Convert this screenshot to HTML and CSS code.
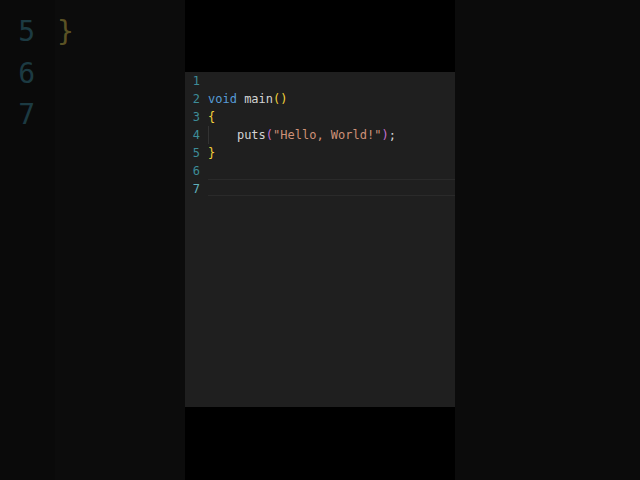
FILE: index.html
```html
<!DOCTYPE html>
<html>
<head>
<meta charset="utf-8">
<link rel="stylesheet" href="styles.css">
</head>
<body>
<div class="stage">
  <div class="side side-left">
    <div class="big-code">
      <div class="big-line"><span class="big-num">5</span><span class="big-brace">}</span></div>
      <div class="big-line"><span class="big-num">6</span></div>
      <div class="big-line"><span class="big-num">7</span></div>
    </div>
  </div>
  <div class="center">
    <div class="editor">
      <div class="line"><span class="ln">1</span><span class="code"></span></div>
      <div class="line"><span class="ln">2</span><span class="code"><span class="kw">void</span> <span class="fn">main</span><span class="br1">()</span></span></div>
      <div class="line"><span class="ln">3</span><span class="code"><span class="br1">{</span></span></div>
      <div class="line"><span class="ln">4</span><span class="code guide">    <span class="fn">puts</span><span class="br2">(</span><span class="str">"Hello, World!"</span><span class="br2">)</span><span class="punc">;</span></span></div>
      <div class="line"><span class="ln">5</span><span class="code"><span class="br1">}</span></span></div>
      <div class="line"><span class="ln">6</span><span class="code"></span></div>
      <div class="line current"><span class="ln">7</span><span class="code"></span></div>
    </div>
  </div>
  <div class="side side-right"></div>
</div>
</body>
</html>
```

FILE: styles.css
```css
* { box-sizing: border-box; }
html, body { margin: 0; padding: 0; background: #000; }
.stage {
  width: 640px;
  height: 480px;
  display: grid;
  grid-template-columns: 185px 270px 185px;
  overflow: hidden;
}
.side { background: #0b0b0b; height: 480px; }
.side-left {
  background: linear-gradient(to right, #0a0a0a 0, #0a0a0a 55px, #0c0c0c 55px);
}
.big-code {
  padding-top: 11px;
  font-family: "DejaVu Sans Mono", monospace;
  font-size: 28px;
  line-height: 41.5px;
}
.big-line { display: flex; height: 41.5px; }
.big-num { width: 35px; text-align: right; color: #1c3a42; }
.big-brace { margin-left: 22px; color: #5a5224; }
.center {
  background: #000;
  height: 480px;
  padding-top: 72px;
}
.editor {
  height: 335px;
  background: #1f1f1f;
  font-family: "DejaVu Sans Mono", monospace;
  font-size: 12px;
  line-height: 18px;
}
.line { display: flex; height: 18px; }
.ln {
  width: 15px;
  text-align: right;
  color: #3d8c98;
  flex: none;
}
.code {
  margin-left: 8px;
  flex: 1;
  color: #d4d4d4;
  white-space: pre;
}
.current .code {
  border-top: 1px solid #2a2a2a;
  border-bottom: 1px solid #2a2a2a;
  height: 17px;
  margin-top: -1px;
}
.current .ln { color: #5fb0bc; }
.guide { box-shadow: inset 1px 0 0 #333; }
.kw { color: #569cd6; }
.fn { color: #d4d4d4; }
.br1 { color: #f5d33a; }
.br2 { color: #c56fd0; }
.str { color: #ce9178; }
.punc { color: #d4d4d4; }
```
